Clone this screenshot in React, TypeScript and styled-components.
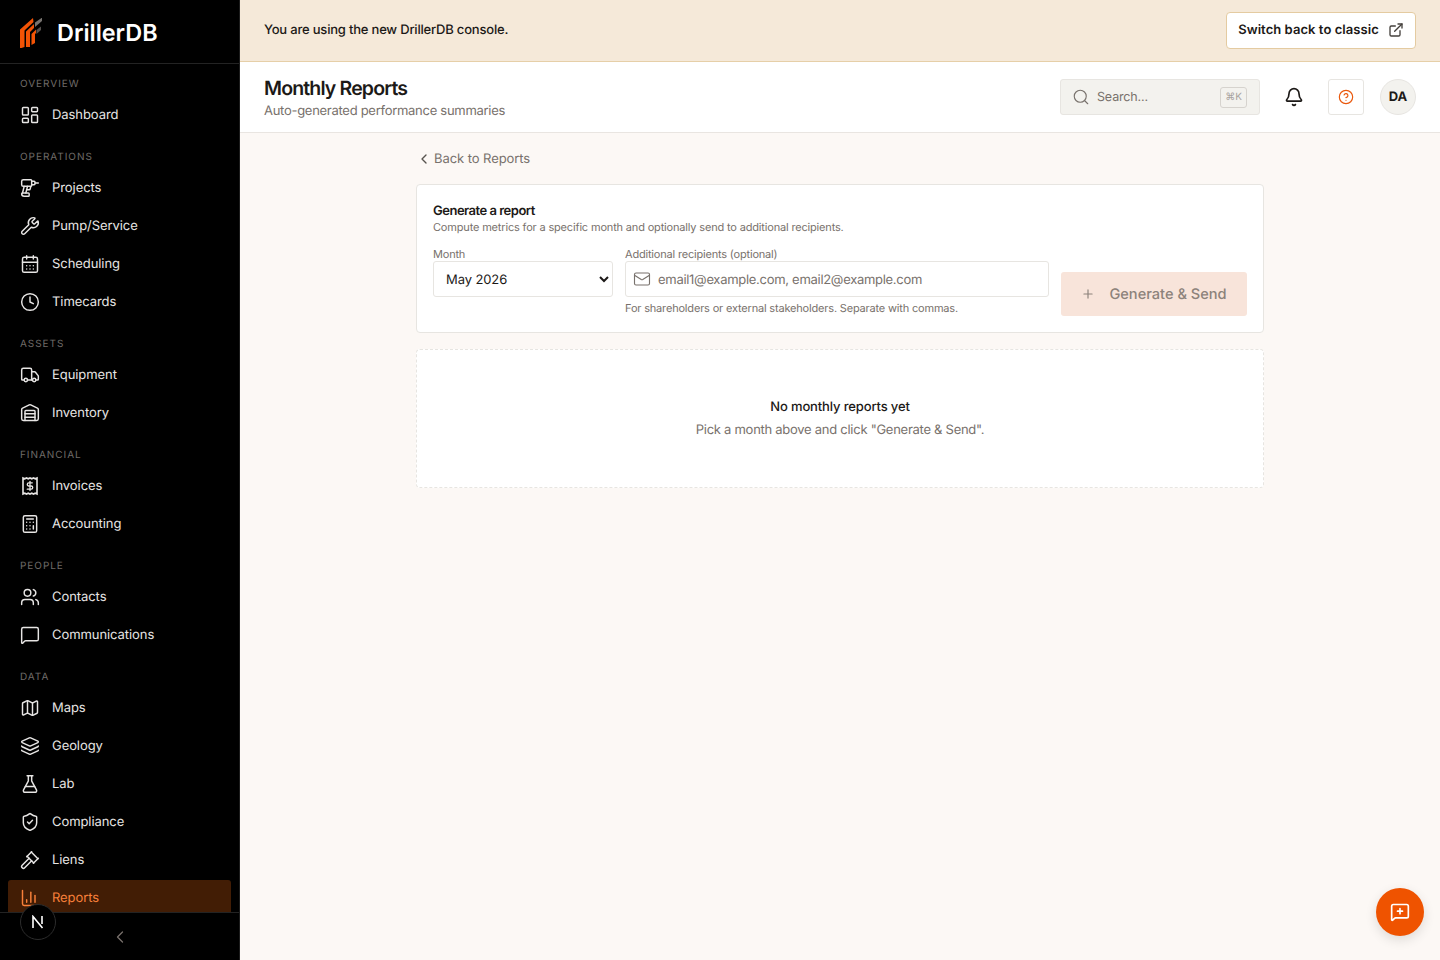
import React from 'react';
import styled, { createGlobalStyle } from 'styled-components';
import {
  Bell,
  Calculator,
  CalendarDays,
  ChartColumn,
  ChevronLeft,
  CircleHelp,
  Clock,
  DollarSign,
  Drill,
  ExternalLink,
  FlaskConical,
  Gavel,
  Layers,
  LayoutDashboard,
  Mail,
  Map as MapIcon,
  MessageSquare,
  MessageSquarePlus,
  Plus,
  Search,
  ShieldCheck,
  Truck,
  Users,
  Warehouse,
  Wrench,
} from 'lucide-react';

const GlobalStyle = createGlobalStyle`
  html, body, #root {
    margin: 0;
    height: 100%;
  }
  body {
    font-family: Inter, "Noto Sans", sans-serif;
    color: #1c1917;
    overflow: hidden;
    text-rendering: geometricPrecision;
  }
  * {
    box-sizing: border-box;
  }
`;

const Shell = styled.div`
  display: flex;
  height: 100vh;
`;

const Sidebar = styled.aside`
  flex: 0 0 240px;
  display: flex;
  flex-direction: column;
  background: #000;
  border-right: 1px solid #1c1c1c;
  color: #e7e5e4;
`;

const Brand = styled.div`
  flex: 0 0 64px;
  display: flex;
  align-items: center;
  gap: 14px;
  padding: 2px 20px 0;
  border-bottom: 1px solid #232323;
`;

const BrandName = styled.span`
  font-size: 23.4px;
  font-weight: 600;
  color: #fff;
`;

const Nav = styled.nav`
  flex: 1;
  min-height: 0;
  overflow: hidden;
  padding: 12px 8px 0;
  display: flex;
  flex-direction: column;
  gap: 16px;
`;

const Section = styled.div`
  display: flex;
  flex-direction: column;
  gap: 2px;
`;

const SectionLabel = styled.div`
  height: 19px;
  padding: 1px 12px 0;
  font-size: 10px;
  line-height: 15px;
  letter-spacing: 0.95px;
  color: #6f6b68;
`;

const NavRow = styled.a<{ $active?: boolean }>`
  flex: 0 0 36px;
  display: flex;
  align-items: center;
  gap: 12px;
  padding: 0 12px;
  border-radius: 3px;
  font-size: 13px;
  font-weight: 400;
  letter-spacing: -0.07px;
  color: ${(p) => (p.$active ? '#f9803a' : '#e7e5e4')};
  background: ${(p) => (p.$active ? '#421d05' : 'transparent')};

  svg {
    flex: none;
  }
`;

const SideFooter = styled.div`
  flex: 0 0 48px;
  display: flex;
  align-items: center;
  justify-content: center;
  border-top: 1px solid #232323;
  color: #78716c;
`;

const DevBadge = styled.div`
  position: absolute;
  left: 20px;
  top: 904px;
  width: 36px;
  height: 36px;
  border-radius: 50%;
  background: #000;
  border: 1px solid #2c2c2c;
  display: flex;
  align-items: center;
  justify-content: center;
`;

const Main = styled.div`
  flex: 1;
  min-width: 0;
  display: flex;
  flex-direction: column;
  background: #fcf8f5;
`;

const Banner = styled.div`
  flex: 0 0 62px;
  display: flex;
  align-items: center;
  justify-content: space-between;
  padding: 0 24px;
  background: #f5e9d9;
  border-bottom: 1px solid #e6cfa8;
`;

const BannerText = styled.span`
  margin-top: -2px;
  font-size: 13px;
  font-weight: 500;
  letter-spacing: -0.2px;
`;

const ClassicButton = styled.button`
  height: 37px;
  width: 190px;
  padding: 0 0 1px;
  display: flex;
  align-items: center;
  justify-content: center;
  gap: 9px;
  background: #fff;
  border: 1px solid #e4cba1;
  border-radius: 4px;
  font: 600 13px Inter, sans-serif;
  letter-spacing: 0.06px;
  text-rendering: geometricPrecision;
  color: #1c1917;

  svg {
    color: #44403c;
  }
`;

const Header = styled.header`
  flex: 0 0 71px;
  display: flex;
  align-items: center;
  justify-content: space-between;
  padding: 0 24px;
  background: #fff;
  border-bottom: 1px solid #e9e5e1;
`;

const Title = styled.h1`
  margin: 1px 0 0;
  font-size: 19.5px;
  line-height: 26px;
  font-weight: 600;
  letter-spacing: -0.85px;
`;

const Subtitle = styled.p`
  margin: 1px 0 0;
  font-size: 13px;
  line-height: 18px;
  letter-spacing: -0.28px;
  color: #78716c;
`;

const HeaderTools = styled.div`
  display: flex;
  align-items: center;
  gap: 16px;
`;

const SearchBox = styled.div`
  width: 200px;
  height: 36px;
  display: flex;
  align-items: center;
  gap: 7px;
  padding: 0 12px 0 11px;
  background: #f3f2ee;
  border: 1px solid #e7e5e1;
  border-radius: 3px;
  color: #78716c;

  svg {
    flex: none;
  }
`;

const SearchInput = styled.input`
  flex: 1;
  min-width: 0;
  border: 0;
  outline: 0;
  background: transparent;
  padding: 0;
  font: 400 12.5px Inter, sans-serif;
  letter-spacing: -0.15px;
  text-rendering: geometricPrecision;

  &::placeholder {
    color: #78716c;
    opacity: 1;
  }
`;

const Kbd = styled.kbd`
  width: 27px;
  height: 21px;
  padding-bottom: 1px;
  display: flex;
  align-items: center;
  justify-content: center;
  border: 1px solid #d6d3ce;
  border-radius: 3px;
  font: 400 10px Inter, "DejaVu Sans", sans-serif;
  color: #a8a29e;
`;

const BellButton = styled.button`
  width: 36px;
  height: 36px;
  padding: 0;
  display: flex;
  align-items: center;
  justify-content: center;
  background: transparent;
  border: 0;
  color: #1c1917;
`;

const HelpButton = styled(BellButton)`
  background: #fff;
  border: 1px solid #e7e5e1;
  border-radius: 3px;
  color: #ea580c;
`;

const Avatar = styled.div`
  width: 36px;
  height: 36px;
  display: flex;
  align-items: center;
  justify-content: center;
  border-radius: 50%;
  background: #f3f2ee;
  border: 1px solid #e7e5e1;
  font-size: 13px;
  font-weight: 700;
`;

const Content = styled.main`
  width: 848px;
  margin: 0 auto;
  padding-top: 16px;
  display: flex;
  flex-direction: column;
  gap: 16px;
`;

const BackLink = styled.a`
  height: 19px;
  display: flex;
  align-items: center;
  gap: 2px;
  font-size: 13px;
  letter-spacing: -0.07px;
  color: #78716c;

  svg {
    color: #57534e;
  }
`;

const Card = styled.section`
  height: 149px;
  padding: 17px 16px 0;
  background: #fff;
  border: 1px solid #e7e5e1;
  border-radius: 4px;
`;

const CardTitle = styled.h2`
  margin: 0;
  font-size: 13px;
  line-height: 18px;
  font-weight: 600;
  letter-spacing: -0.5px;
`;

const CardText = styled.p`
  margin: -1px 0 12px;
  font-size: 11px;
  line-height: 16px;
  letter-spacing: -0.17px;
  color: #78716c;
`;

const FormRow = styled.div`
  display: flex;
  align-items: flex-end;
  gap: 12px;
`;

const Field = styled.div<{ $width?: number }>`
  flex: ${(p) => (p.$width ? `0 0 ${p.$width}px` : '1')};
  min-width: 0;
`;

const FieldLabel = styled.label`
  display: block;
  font-size: 11px;
  line-height: 14px;
  letter-spacing: -0.19px;
  color: #78716c;
`;

const MonthSelect = styled.select`
  width: 100%;
  height: 36px;
  padding: 2px 8px 0;
  background: #fff;
  border: 1px solid #e7e5e1;
  border-radius: 3px;
  font: 400 13px Inter, sans-serif;
  letter-spacing: -0.1px;
  text-rendering: geometricPrecision;
  color: #1c1917;
`;

const InputWrap = styled.div`
  height: 36px;
  display: flex;
  align-items: center;
  gap: 7px;
  padding: 0 8px 0 7px;
  border: 1px solid #e7e5e1;
  border-radius: 3px;
  color: #78716c;

  svg {
    flex: none;
  }
`;

const EmailInput = styled.input`
  flex: 1;
  min-width: 0;
  border: 0;
  outline: 0;
  padding: 2px 0 0;
  font: 400 13px Inter, sans-serif;
  letter-spacing: -0.29px;
  text-rendering: geometricPrecision;

  &::placeholder {
    color: #78716c;
    opacity: 1;
  }
`;

const HelpText = styled.p`
  margin: 4px 0 0;
  font-size: 11px;
  line-height: 14px;
  letter-spacing: -0.18px;
  color: #78716c;
`;

const GenerateButton = styled.button`
  flex: 0 0 186px;
  height: 44px;
  margin-bottom: -1px;
  display: flex;
  align-items: center;
  justify-content: center;
  gap: 14px;
  background: #f8e4da;
  border: 0;
  border-radius: 3px;
  font: 500 14.6px Inter, sans-serif;
  text-rendering: geometricPrecision;
  color: #8c827b;
`;

const EmptyCard = styled.section`
  height: 139px;
  display: flex;
  flex-direction: column;
  align-items: center;
  justify-content: center;
  gap: 5px;
  background: #fff;
  border: 1px dashed #e7e5e1;
  border-radius: 4px;
`;

const EmptyTitle = styled.h3`
  margin: 0;
  font-size: 13px;
  line-height: 18px;
  font-weight: 500;
  letter-spacing: -0.14px;
`;

const EmptyText = styled.p`
  margin: 0;
  font-size: 13px;
  line-height: 18px;
  letter-spacing: -0.27px;
  color: #78716c;
`;

const Fab = styled.button`
  position: absolute;
  right: 16px;
  bottom: 24px;
  width: 48px;
  height: 48px;
  display: flex;
  align-items: center;
  justify-content: center;
  border: 0;
  border-radius: 50%;
  background: #ef5300;
  color: #fff;
  box-shadow: 0 4px 12px rgba(0, 0, 0, 0.12);
`;

function Logo() {
  return (
    <svg width="23" height="30" viewBox="0 0 23 30" fill="none">
      <path d="M0 11.500 13 0l.5 4L4.500 12.500V29L1.500 30H0z" fill="#f25305" />
      <path d="M6 13.500 14 6v4l-4 4V29H6z" fill="#f25305" />
      <path d="M11.500 16 16 11.500V15l-1 1V25l-3.500 2z" fill="#f25305" />
      <path d="M15 4.500 21.500 0h.5v3l-7 6z" fill="#77736f" />
      <path d="M16.500 12 21 8.500V12l-4.500 4z" fill="#55514e" />
    </svg>
  );
}

function InvoiceIcon() {
  return (
    <svg width="20" height="20" viewBox="0 0 20 20" fill="none" stroke="currentColor" strokeWidth="1.6">
      <path d="M3 2l1.750 .8L6.500 2l1.750 .8L10 2l1.750 .8L13.500 2l1.750 .8L17 2v16l-1.750 -.8L13.500 18l-1.750 -.8L10 18l-1.750 -.8L6.500 18l-1.750 -.8L3 18z" />
      <DollarSign x="4.500" y="4.500" width="11" height="11" strokeWidth="2.800" />
    </svg>
  );
}

type NavItem = { label: string; icon: React.ReactNode; active?: boolean };

const icon = { size: 20, strokeWidth: 1.75 };

const sections: { title: string; items: NavItem[] }[] = [
  { title: 'OVERVIEW', items: [{ label: 'Dashboard', icon: <LayoutDashboard {...icon} /> }] },
  {
    title: 'OPERATIONS',
    items: [
      { label: 'Projects', icon: <Drill {...icon} /> },
      { label: 'Pump/Service', icon: <Wrench {...icon} /> },
      { label: 'Scheduling', icon: <CalendarDays {...icon} /> },
      { label: 'Timecards', icon: <Clock {...icon} /> },
    ],
  },
  {
    title: 'ASSETS',
    items: [
      { label: 'Equipment', icon: <Truck {...icon} /> },
      { label: 'Inventory', icon: <Warehouse {...icon} /> },
    ],
  },
  {
    title: 'FINANCIAL',
    items: [
      { label: 'Invoices', icon: <InvoiceIcon /> },
      { label: 'Accounting', icon: <Calculator {...icon} /> },
    ],
  },
  {
    title: 'PEOPLE',
    items: [
      { label: 'Contacts', icon: <Users {...icon} /> },
      { label: 'Communications', icon: <MessageSquare {...icon} /> },
    ],
  },
  {
    title: 'DATA',
    items: [
      { label: 'Maps', icon: <MapIcon {...icon} /> },
      { label: 'Geology', icon: <Layers {...icon} /> },
      { label: 'Lab', icon: <FlaskConical {...icon} /> },
      { label: 'Compliance', icon: <ShieldCheck {...icon} /> },
      { label: 'Liens', icon: <Gavel {...icon} /> },
      { label: 'Reports', icon: <ChartColumn {...icon} />, active: true },
    ],
  },
];

export default function App() {
  return (
    <Shell>
      <GlobalStyle />
      <Sidebar>
        <Brand>
          <Logo />
          <BrandName>DrillerDB</BrandName>
        </Brand>
        <Nav>
          {sections.map((section) => (
            <Section key={section.title}>
              <SectionLabel>{section.title}</SectionLabel>
              {section.items.map((item) => (
                <NavRow key={item.label} $active={item.active}>
                  {item.icon}
                  {item.label}
                </NavRow>
              ))}
            </Section>
          ))}
        </Nav>
        <SideFooter>
          <ChevronLeft size={20} strokeWidth={1.5} />
        </SideFooter>
      </Sidebar>
      <DevBadge>
        <svg width="14" height="14" viewBox="0 0 14 14" fill="none" stroke="#fff" strokeWidth="1.6">
          <path d="M2 13V1.500L11.500 13" />
          <path d="M11 1v8" />
        </svg>
      </DevBadge>
      <Main>
        <Banner>
          <BannerText>You are using the new DrillerDB console.</BannerText>
          <ClassicButton>
            Switch back to classic
            <ExternalLink size={16} strokeWidth={2} />
          </ClassicButton>
        </Banner>
        <Header>
          <div>
            <Title>Monthly Reports</Title>
            <Subtitle>Auto-generated performance summaries</Subtitle>
          </div>
          <HeaderTools>
            <SearchBox>
              <Search size={18} strokeWidth={1.5} />
              <SearchInput placeholder="Search..." />
              <Kbd>⌘K</Kbd>
            </SearchBox>
            <BellButton>
              <Bell size={20} strokeWidth={2} />
            </BellButton>
            <HelpButton>
              <CircleHelp size={16} strokeWidth={1.75} />
            </HelpButton>
            <Avatar>DA</Avatar>
          </HeaderTools>
        </Header>
        <Content>
          <BackLink>
            <ChevronLeft size={16} strokeWidth={2} />
            Back to Reports
          </BackLink>
          <Card>
            <CardTitle>Generate a report</CardTitle>
            <CardText>Compute metrics for a specific month and optionally send to additional recipients.</CardText>
            <FormRow>
              <Field $width={180}>
                <FieldLabel>Month</FieldLabel>
                <MonthSelect defaultValue="May 2026">
                  <option>May 2026</option>
                  <option>April 2026</option>
                </MonthSelect>
                <HelpText>&nbsp;</HelpText>
              </Field>
              <Field>
                <FieldLabel>Additional recipients (optional)</FieldLabel>
                <InputWrap>
                  <Mail size={18} strokeWidth={1.5} />
                  <EmailInput placeholder="email1@example.com, email2@example.com" />
                </InputWrap>
                <HelpText>For shareholders or external stakeholders. Separate with commas.</HelpText>
              </Field>
              <GenerateButton disabled>
                <Plus size={14} strokeWidth={2} />
                Generate &amp; Send
              </GenerateButton>
            </FormRow>
          </Card>
          <EmptyCard>
            <EmptyTitle>No monthly reports yet</EmptyTitle>
            <EmptyText>Pick a month above and click "Generate &amp; Send".</EmptyText>
          </EmptyCard>
        </Content>
      </Main>
      <Fab>
        <MessageSquarePlus size={20} strokeWidth={2} />
      </Fab>
    </Shell>
  );
}
